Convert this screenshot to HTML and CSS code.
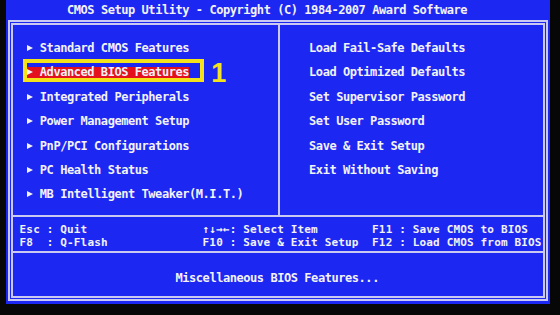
FILE: index.html
```html
<!DOCTYPE html>
<html lang="en">
<head>
  <meta charset="UTF-8">
  <title>CMOS Setup Utility</title>
  <link rel="stylesheet" href="styles.css">
</head>
<body>

  <div class="screen">
    <div class="title">CMOS Setup Utility - Copyright (C) 1984-2007 Award Software</div>

    <div class="frame">
      <div class="inner">

        <div class="menus">
          <ul class="col left">
            <li><span class="item"><i class="arrow"></i>Standard CMOS Features</span></li>
            <li class="marked">
              <span class="item sel"><i class="arrow"></i>Advanced BIOS Features</span>
              <span class="callout"></span>
              <span class="step">1</span>
            </li>
            <li><span class="item"><i class="arrow"></i>Integrated Peripherals</span></li>
            <li><span class="item"><i class="arrow"></i>Power Management Setup</span></li>
            <li><span class="item"><i class="arrow"></i>PnP/PCI Configurations</span></li>
            <li><span class="item"><i class="arrow"></i>PC Health Status</span></li>
            <li><span class="item"><i class="arrow"></i>MB Intelligent Tweaker(M.I.T.)</span></li>
          </ul>
          <ul class="col right">
            <li><span class="item">Load Fail-Safe Defaults</span></li>
            <li><span class="item">Load Optimized Defaults</span></li>
            <li><span class="item">Set Supervisor Password</span></li>
            <li><span class="item">Set User Password</span></li>
            <li><span class="item">Save &amp; Exit Setup</span></li>
            <li><span class="item">Exit Without Saving</span></li>
          </ul>
        </div>

        <div class="keys">
          <div class="keygroup">
            <div>Esc : Quit</div>
            <div>F8  : Q-Flash</div>
          </div>
          <div class="keygroup">
            <div>↑↓→←: Select Item</div>
            <div>F10 : Save &amp; Exit Setup</div>
          </div>
          <div class="keygroup">
            <div>F11 : Save CMOS to BIOS</div>
            <div>F12 : Load CMOS from BIOS</div>
          </div>
        </div>

        <div class="status">Miscellaneous BIOS Features...</div>

      </div>
    </div>
  </div>

</body>
</html>
```

FILE: styles.css
```css
html, body {
  margin: 0;
  background-color: #070707;
}

body {
  width: 560px;
  height: 315px;
  overflow: hidden;
}

.screen {
  margin-left: 6px;
  width: 544px;
  height: 304px;
  background-color: #1d27f2;
  color: #f2f2f8;
  font-family: "DejaVu Sans Mono", "Liberation Mono", monospace;
  font-weight: bold;
  font-size: 12px;
  letter-spacing: -0.444px;
}

.title {
  height: 20px;
  line-height: 20px;
  padding-left: 61px;
}

.frame {
  margin: 0 2px;
  border: 2px solid #c9c9f2;
  padding: 1px;
}

.inner {
  border: 2px solid #c9c9f2;
}

/* menu area */
.menus {
  display: flex;
  height: 190px;
  border-bottom: 2px solid #c9c9f2;
}

.col {
  list-style: none;
  margin: 0;
  padding: 11.3px 0 0 0;
}

.col li {
  position: relative;
  height: 24.4px;
  display: flex;
  align-items: center;
}

.left {
  width: 267px;
  border-right: 2px solid #c9c9f2;
  padding-left: 13.3px;
  box-sizing: border-box;
}

.right {
  flex: 1;
  padding-left: 29.1px;
}

.item {
  display: inline-block;
  line-height: 11px;
  height: 11px;
  white-space: pre;
}

.arrow {
  display: inline-block;
  width: 13.56px;
  height: 11px;
  vertical-align: top;
  position: relative;
}

.arrow::before {
  content: "";
  position: absolute;
  left: 1px;
  top: 2px;
  border-left: 6px solid #f2f2f8;
  border-top: 3.5px solid transparent;
  border-bottom: 3.5px solid transparent;
}

.sel {
  background-color: #e5101e;
}

/* annotation drawn over the screenshot */
.callout {
  position: absolute;
  left: -3.6px;
  top: -2px;
  width: 181px;
  height: 23px;
  border: 4px solid #f4e21a;
  box-sizing: border-box;
}

.step {
  position: absolute;
  left: 185px;
  top: -0.5px;
  font-family: "Liberation Sans", Arial, sans-serif;
  font-size: 27px;
  line-height: 27px;
  letter-spacing: 0;
  color: #f4e21a;
}

/* key help */
.keys {
  display: grid;
  grid-template-columns: 183px 169.5px auto;
  height: 28px;
  padding-left: 6.6px;
  padding-top: 6px;
  font-size: 11px;
  letter-spacing: 0.158px;
  line-height: 13px;
  border-bottom: 2px solid #c9c9f2;
}

.keygroup div {
  white-space: pre;
}

.status {
  height: 43px;
  box-sizing: border-box;
  padding-top: 19px;
  padding-left: 162.5px;
  line-height: 12px;
}
```
